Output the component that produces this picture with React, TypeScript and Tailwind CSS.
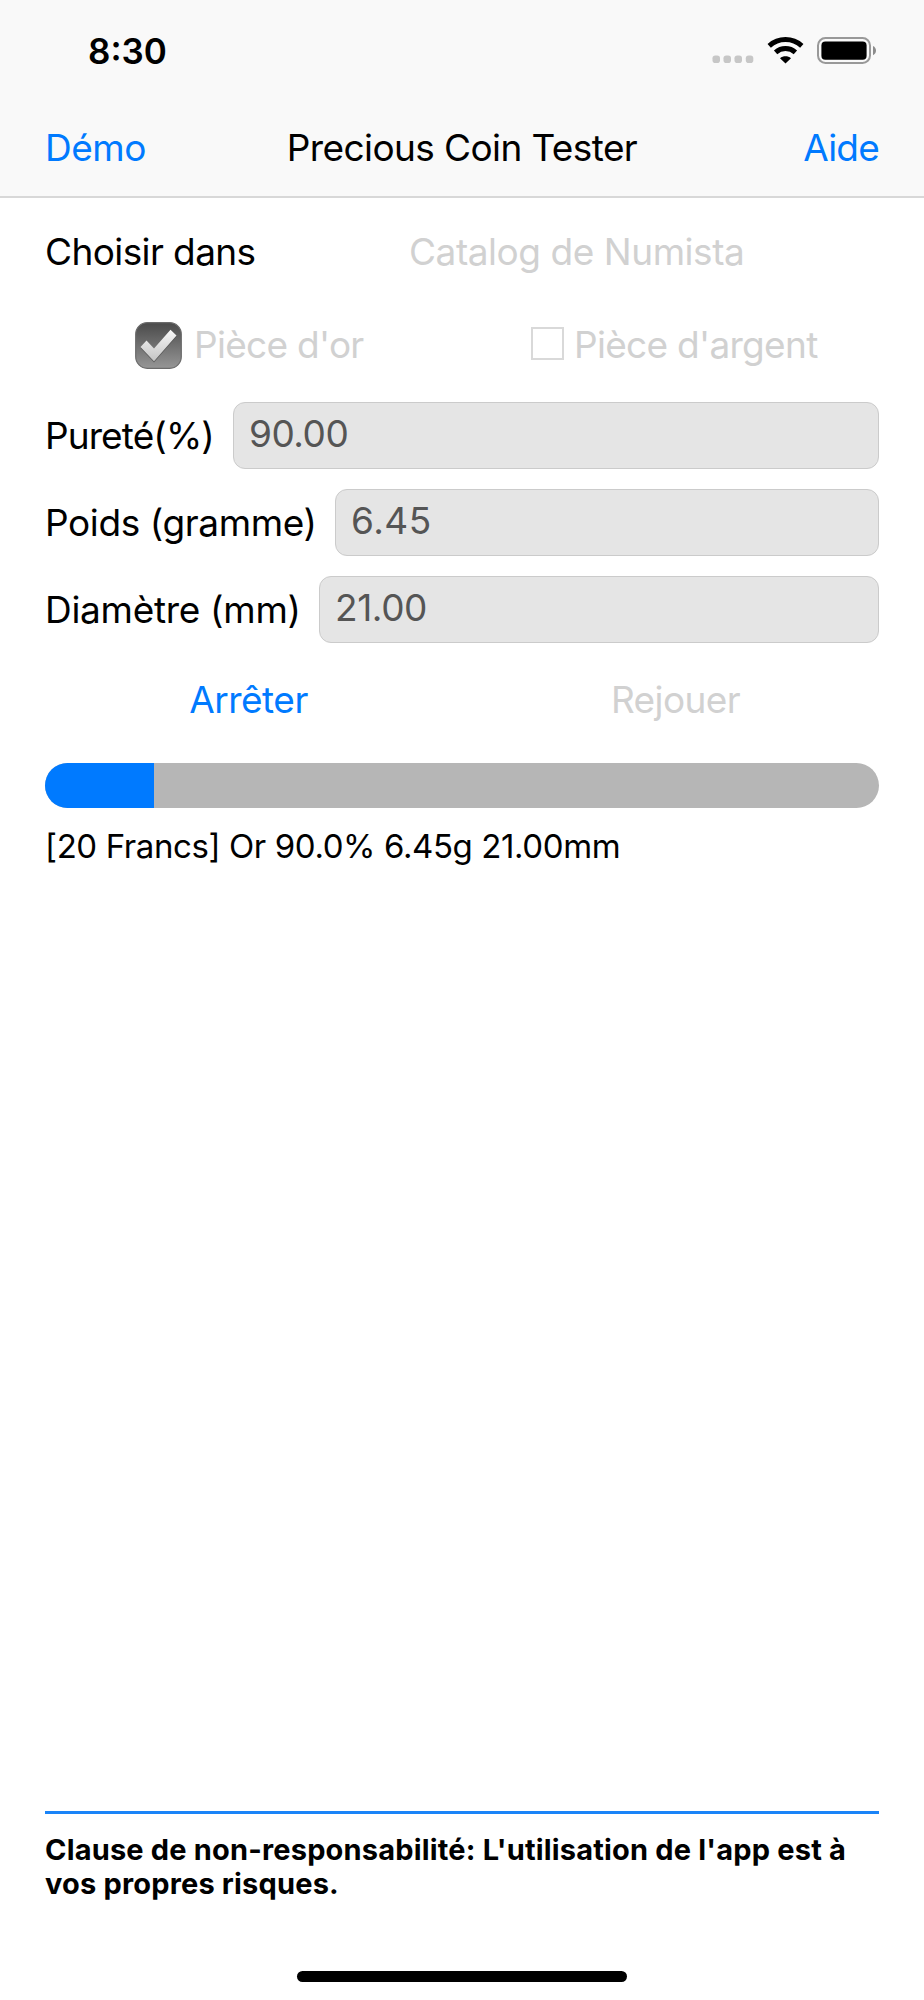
import { useState } from 'react';

interface FieldProps {
  label: string;
  value: string;
  labelClass: string;
  valueClass: string;
}

function Field({ label, value, labelClass, valueClass }: FieldProps) {
  return (
    <div className="flex h-[67px] items-center">
      <label className={`shrink-0 whitespace-nowrap pt-px ${labelClass}`}>{label}</label>
      <div className="flex h-full flex-1 items-center rounded-[12px] border border-[#cbcbcb] bg-[#e5e5e5] pb-[3px] pl-[15px]">
        <span className={`whitespace-nowrap text-[#555555] ${valueClass}`}>{value}</span>
      </div>
    </div>
  );
}

function StatusBar() {
  return (
    <div className="flex h-[100px] items-center justify-between pl-[88px] pr-[48px]">
      <span className="pt-[2px] text-[35px] font-semibold leading-none">8:30</span>
      <div className="flex items-center pt-px">
        <svg width="42" height="28" viewBox="0 0 42 28" fill="#c7c7c7">
          <rect x="0.5" y="18.5" width="7.5" height="7.5" rx="2.8" />
          <rect x="11.5" y="18.5" width="7.5" height="7.5" rx="2.8" />
          <rect x="22.5" y="18.5" width="7.5" height="7.5" rx="2.8" />
          <rect x="33.8" y="18.5" width="7.5" height="7.5" rx="2.8" />
        </svg>
        {/* wifi */}
        <svg className="ml-[13px]" width="37" height="28" viewBox="0 0 37 28" fill="none" stroke="#000">
          <path d="M2.2 8.8 C11.5 .5 25.5 .5 34.8 8.8" strokeWidth="5" />
          <path d="M8.6 15.4 C14.3 10.3 22.7 10.3 28.4 15.4" strokeWidth="5" />
          <path d="M18.5 26.6 L13 21.2 C16.2 18.6 20.8 18.6 24 21.2 Z" fill="#000" stroke="none" />
        </svg>
        {/* battery */}
        <svg className="ml-[13px]" width="59" height="28" viewBox="0 0 59 28">
          <rect x="1" y="1" width="52" height="25" rx="7.5" fill="none" stroke="#999" strokeWidth="2" />
          <rect x="4.4" y="4.4" width="45.2" height="18.4" rx="4" fill="#000" />
          <path d="M56 9 C60 10.6 60 16.6 56 18.2 Z" fill="#8c8c8c" />
        </svg>
      </div>
    </div>
  );
}

function CheckedBox() {
  return (
    <svg className="shrink-0" width="47" height="47" viewBox="0 0 47 47">
      <defs>
        <linearGradient id="box" x1="0" y1="0" x2="0" y2="1">
          <stop offset="0" stopColor="#4a4a4a" />
          <stop offset="1" stopColor="#969696" />
        </linearGradient>
        <linearGradient id="tick" x1="0" y1="0" x2="0" y2="1">
          <stop offset="0" stopColor="#f8f8f8" />
          <stop offset="1" stopColor="#c4c4c4" />
        </linearGradient>
      </defs>
      <rect x="0.7" y="0.7" width="45.6" height="45.6" rx="11.5" fill="url(#box)" stroke="#6b6b6b" strokeWidth="1.2" />
      <path d="M5.5 26 L11.5 19 L19 27.5 L35.5 8.8 L41.5 14.5 L19 40.5 Z" fill="#444" opacity="0.6" />
      <path d="M5.5 25 L11.5 18.4 L19 26.5 L35.5 7.8 L41.5 13.6 L19 39.2 Z" fill="url(#tick)" />
    </svg>
  );
}

export default function App() {
  const [progress] = useState(109);

  return (
    <div className="flex h-[2000px] w-[924px] flex-col bg-white font-['Inter',sans-serif] text-[37px] leading-[46px] text-black">
      <header className="h-[198px] border-b-2 border-[#d8d8d8] bg-[#f9f9f9]">
        <StatusBar />
        <nav className="grid h-[96px] grid-cols-[1fr_auto_1fr] items-center px-[45px]">
          <button type="button" className="justify-self-start text-[#007aff] tracking-[-0.5px]">Démo</button>
          <h1 className="whitespace-nowrap tracking-[-0.6px]">Precious Coin Tester</h1>
          <button type="button" className="justify-self-end text-[#007aff] tracking-[-0.8px]">Aide</button>
        </nav>
      </header>

      <main className="flex flex-1 flex-col px-[45px]">
        <div className="mt-[31px] flex">
          <span className="w-[364px] tracking-[-0.6px]">Choisir dans</span>
          <button type="button" className="whitespace-nowrap text-[#d1d1d1] tracking-[-0.45px]">Catalog de Numista</button>
        </div>

        <div className="mt-[47px] flex h-[47px] items-center pl-[90px] text-[#d1d1d1]">
          <div className="flex w-[396px] items-center">
            <CheckedBox />
            <span className="ml-[12px] whitespace-nowrap pb-[2px] tracking-[-0.7px]">Pièce d'or</span>
          </div>
          <span className="mb-[5px] size-[33px] shrink-0 border-2 border-[#d9d9d9]" />
          <span className="ml-[10px] whitespace-nowrap pb-[2px] tracking-[-0.7px]">Pièce d'argent</span>
        </div>

        <div className="mt-[33px] flex flex-col gap-[20px]">
          <Field label="Pureté(%)" value="90.00" labelClass="w-[188px] tracking-[-0.9px]" valueClass="tracking-[-0.5px]" />
          <Field label="Poids (gramme)" value="6.45" labelClass="w-[290px] tracking-[-0.4px]" valueClass="tracking-[0.5px]" />
          <Field label="Diamètre (mm)" value="21.00" labelClass="w-[274px] tracking-[-0.3px]" valueClass="tracking-[-0.4px]" />
        </div>

        <div className="mt-[34px] grid grid-cols-2 gap-5">
          <button type="button" className="text-[#007aff] tracking-[-0.5px]">Arrêter</button>
          <button type="button" className="text-[#d1d1d1] tracking-[-0.6px]">Rejouer</button>
        </div>

        <div className="mt-[40px] h-[45px] shrink-0 overflow-hidden rounded-full bg-[#b6b6b6]">
          <div className="h-full bg-[#007aff]" style={{ width: progress }} />
        </div>
        <p className="mt-[15px] whitespace-nowrap text-[33px] tracking-[-0.4px]">[20 Francs] Or 90.0% 6.45g 21.00mm</p>
      </main>

      <footer className="flex h-[189px] flex-col px-[45px]">
        <div className="h-[3px] shrink-0 bg-[#1a84f8]" />
        <p className="mt-[19px] text-[29px] font-bold leading-[34px] tracking-[0.18px]">
          Clause de non-responsabilité: L'utilisation de l'app est à<br />
          vos propres risques.
        </p>
        <div className="mb-[18px] mt-auto h-[11px] w-[330px] shrink-0 self-center rounded-full bg-black" />
      </footer>
    </div>
  );
}
